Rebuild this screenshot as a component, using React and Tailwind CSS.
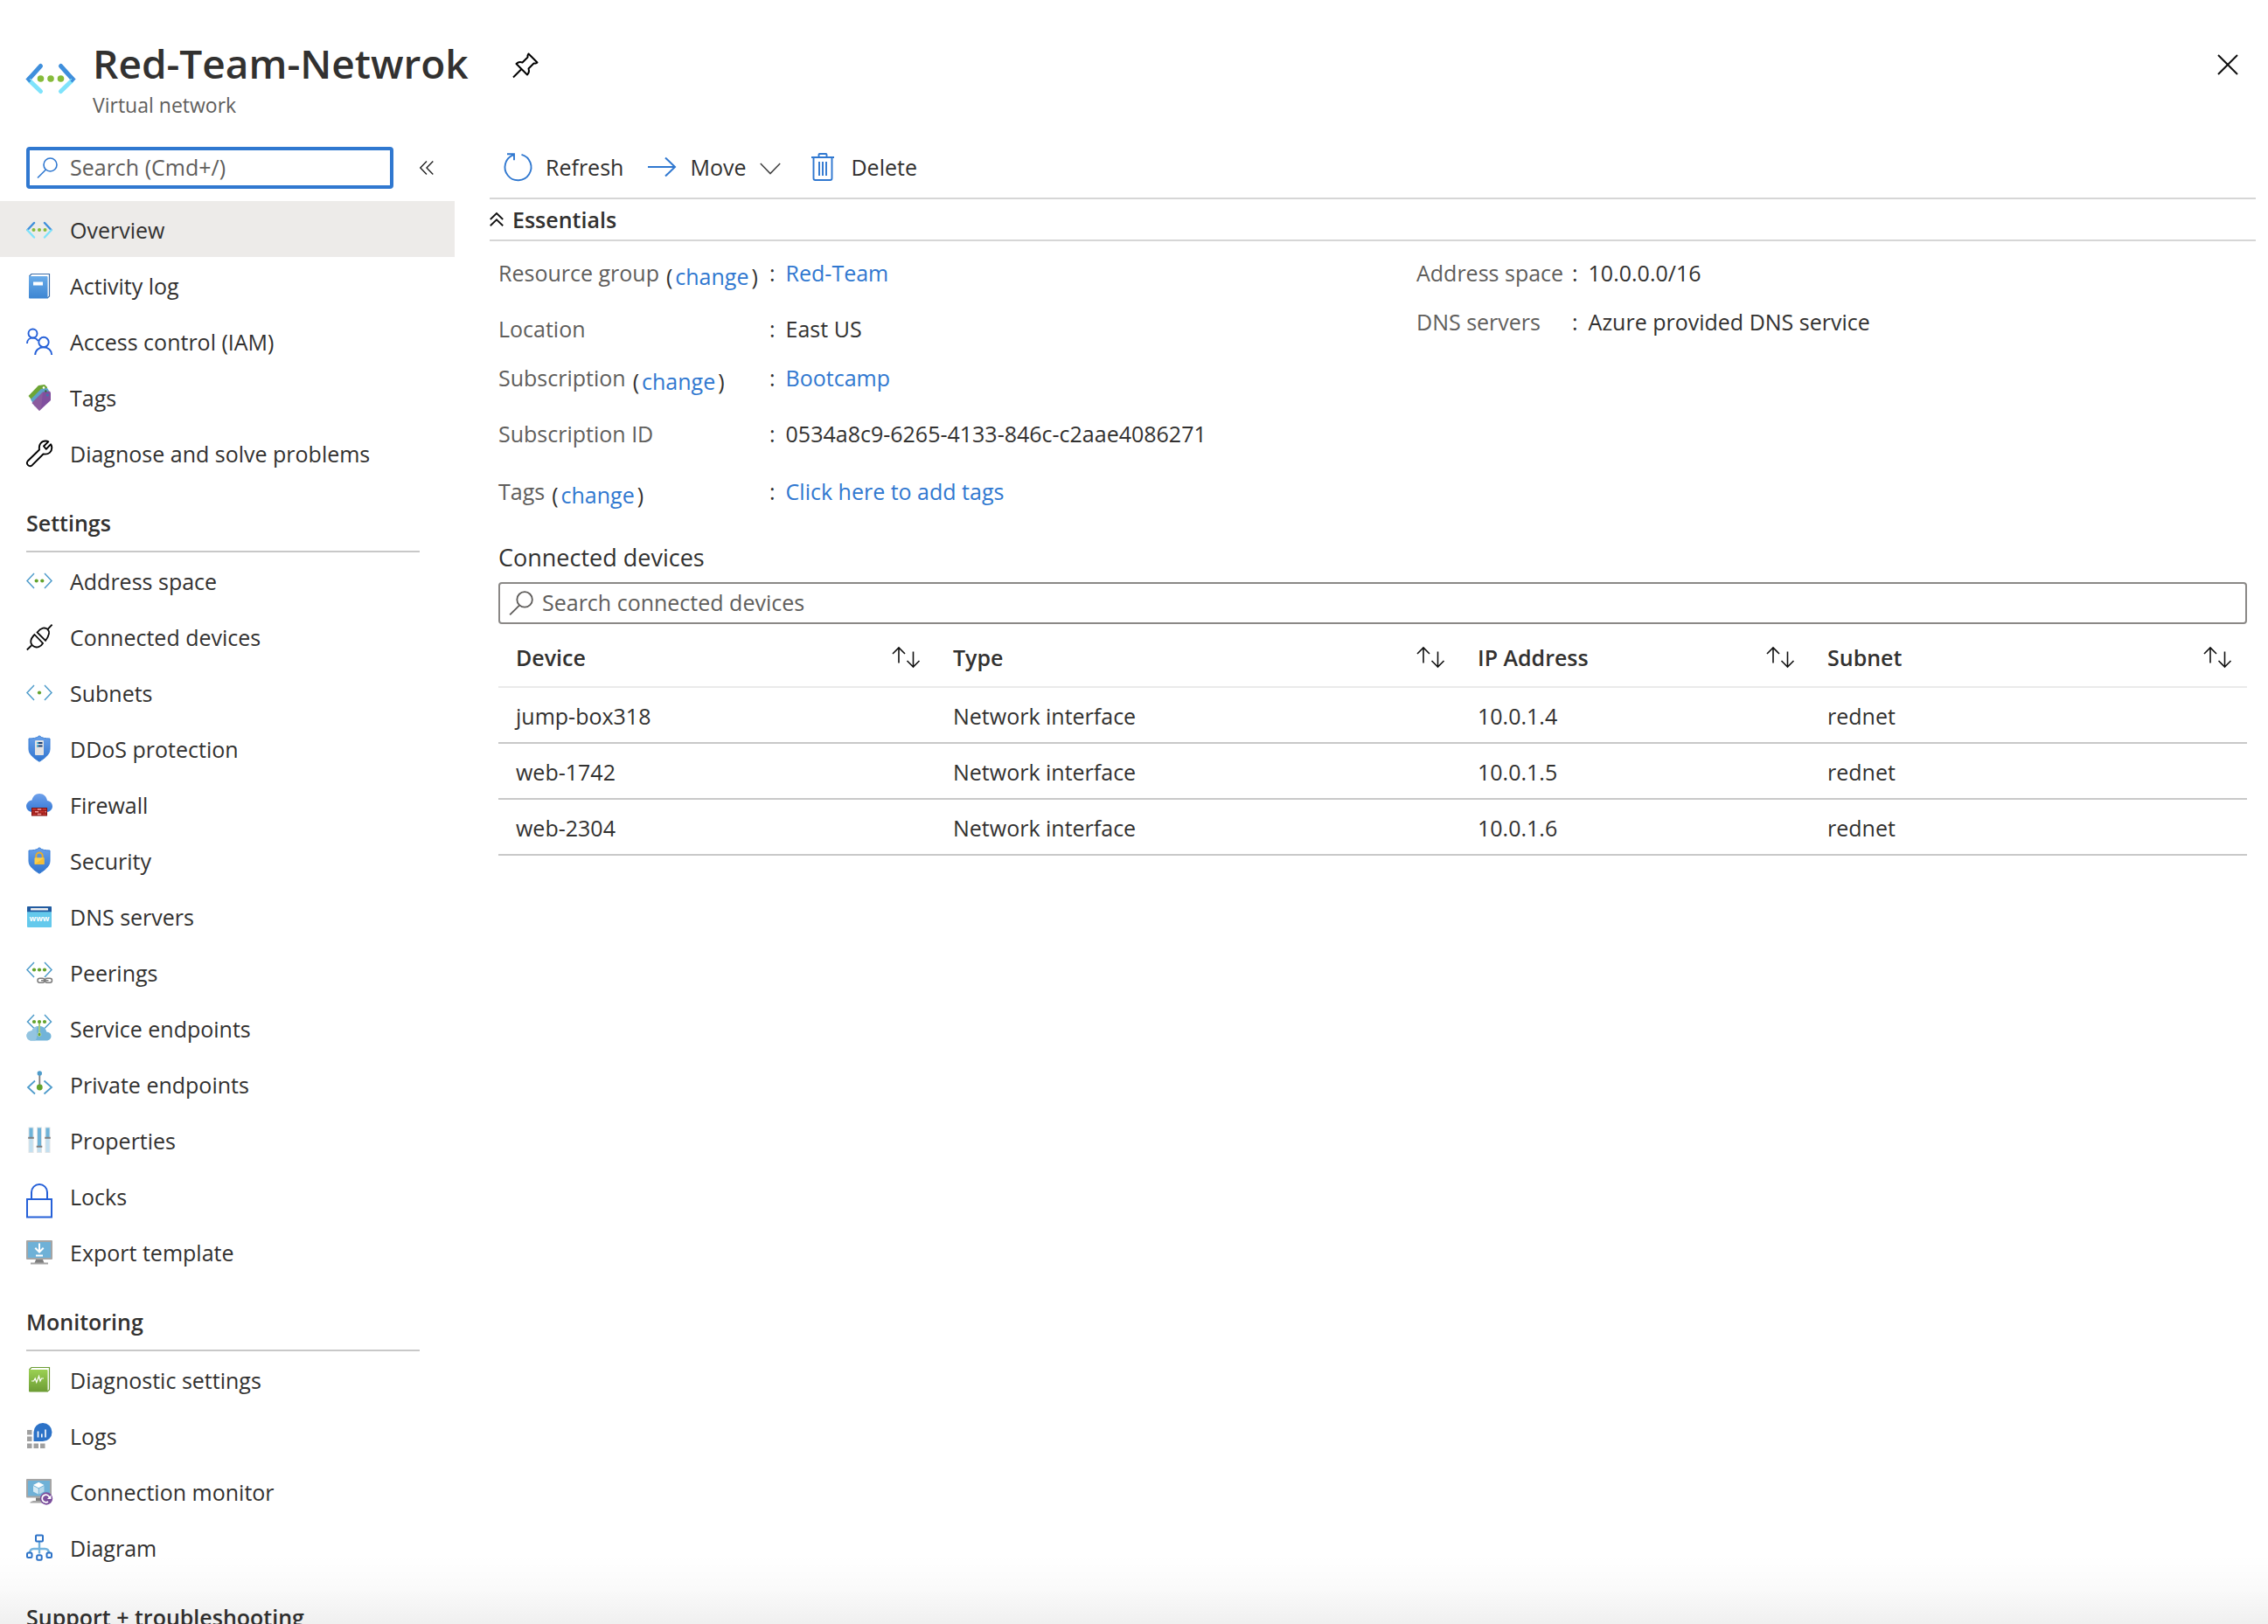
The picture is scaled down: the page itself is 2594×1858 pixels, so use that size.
import React, { useState } from "react";

/* ---------- icons ---------- */

function Svg({ box = "0 0 30 30", className = "size-[30px]", children }) {
  return (
    <svg viewBox={box} className={`shrink-0 overflow-visible ${className}`} fill="none" aria-hidden="true">
      {children}
    </svg>
  );
}

function NetworkIcon({ className }) {
  return (
    <Svg box="0 0 56 34" className={className}>
      <path d="M16.5 2.5 3 17.5M39.5 2.5 53 17.5" stroke="#3f8fdc" strokeWidth="5" strokeLinecap="round" />
      <path d="M4 19.5 16.5 31.5M52 19.5 39.5 31.5" stroke="#7fe3fb" strokeWidth="5" strokeLinecap="round" />
      <path d="M5 14.5 1.5 17.5 4.5 20.5M51 14.5 54.5 17.5 51.5 20.5" stroke="#3f8fdc" strokeWidth="3" />
      <g fill="#86bb3b">
        <circle cx="16.5" cy="17" r="3.8" />
        <circle cx="28" cy="17" r="3.8" />
        <circle cx="39.5" cy="17" r="3.8" />
      </g>
    </Svg>
  );
}

function Brackets({ top = 7 }) {
  return (
    <path
      d={`M9 ${top} 1 ${top + 8.5} 9 ${top + 17}M21 ${top} 29 ${top + 8.5} 21 ${top + 17}`}
      stroke="#4f9ccb"
      strokeWidth="1.5"
    />
  );
}

const OverviewIcon = () => (
  <Svg>
    <path d="M9 8 1.5 16M21 8 28.5 16" stroke="#3f8fdc" strokeWidth="2.4" strokeLinecap="round" />
    <path d="M1.5 16.5 9 24.5M28.5 16.5 21 24.5" stroke="#7fe3fb" strokeWidth="2.4" strokeLinecap="round" />
    <g fill="#86bb3b">
      <circle cx="8.5" cy="16" r="2" />
      <circle cx="15" cy="16" r="2" />
      <circle cx="21.5" cy="16" r="2" />
    </g>
  </Svg>
);

const ActivityIcon = () => (
  <Svg>
    <defs>
      <linearGradient id="bookBlue" x1="0" y1="0" x2="0" y2="1">
        <stop stopColor="#69abe9" />
        <stop offset="1" stopColor="#3d85d2" />
      </linearGradient>
    </defs>
    <path d="M3.5 5 6 2.5H26.5V28L24 30" stroke="#3c6da8" strokeWidth="1.2" fill="#fff" />
    <path d="M3 5h20.5a1 1 0 0 1 1 1v24.5H4a1 1 0 0 1-1-1z" fill="url(#bookBlue)" />
    <rect x="8" y="11.5" width="11" height="4" fill="#fff" />
  </Svg>
);

const AccessIcon = () => (
  <Svg>
    <g stroke="#2560d8" strokeWidth="1.9">
      <circle cx="7.5" cy="6.5" r="5" />
      <path d="M1 18C1 14 4 11.6 7.5 11.6c2.7 0 5 1.4 6 3.6" />
      <circle cx="20" cy="16.5" r="5.7" />
      <path d="M10.200 31c0-5 4.300-8.800 9.600-8.800s9.400 3.800 9.400 8.800" />
    </g>
  </Svg>
);

const TagsIcon = () => (
  <Svg>
    <path d="M2.500 14 14 2l7-1 3 3-1 8L8 21z" fill="#6da535" />
    <path d="M5 18 17 6l7-1 2 3-1 9-15 9z" fill="#5ea0c8" />
    <path d="M6.500 22 19 9.500l8-1 1 2V19L15 31z" fill="#804f9e" />
    <path d="M6.500 22 19 9.500 17 29l-2 2z" fill="#93649f" opacity=".6" />
    <circle cx="20" cy="4.5" r="1.3" fill="#fff" />
    <circle cx="22.3" cy="8.5" r="1.2" fill="#356b35" />
    <circle cx="24.3" cy="13" r="1.6" fill="#3e77ad" />
  </Svg>
);

const WrenchIcon = () => (
  <Svg>
    <path
      d="M15 11.5C14 5.5 17.5 1.5 22 1.5c1.2 0 2.4.3 3.300.9L20 7.5l2.800 3.300L28 5.300c1 1.300 1.300 2.700 1.300 4C29.300 13.500 26 17.500 19.500 16.500L6.600 29.400A3.500 3.500 0 0 1 1.700 24.500z"
      stroke="#000"
      strokeWidth="1.9"
      strokeLinejoin="round"
    />
  </Svg>
);

const AddressIcon = () => (
  <Svg>
    <Brackets />
    <circle cx="11.7" cy="15.5" r="2.1" fill="#63a32c" />
    <circle cx="18.3" cy="15.5" r="2.1" fill="#63a32c" />
  </Svg>
);

const PlugIcon = () => (
  <Svg>
    <g stroke="#0a0a0a" strokeWidth="1.8">
      <path d="M.8 30.500 6 25.500M24 7.500 29.600 1.700" />
      <path d="M9.500 13 19 23c-2.200 4.200-7.200 5.500-10.400 3.600C4 23.800 4 18.500 9.500 13z" />
      <path d="M12.500 10.500c4.500-5.500 9-6 11.900-3.600 2.700 2.600 1.900 7.400-2.400 13.100z" />
    </g>
  </Svg>
);

const SubnetsIcon = () => (
  <Svg>
    <Brackets />
    <circle cx="15" cy="15.5" r="2.1" fill="#63a32c" />
  </Svg>
);

function Shield({ children }) {
  return (
    <Svg>
      <defs>
        <linearGradient id="shieldBlue" x1="0" y1="0" x2="0" y2="1">
          <stop stopColor="#6ba2ea" />
          <stop offset="1" stopColor="#2f74cf" />
        </linearGradient>
      </defs>
      <path
        d="M15 .8c3.200 3 7.200 3 12 3.200V16c0 6-5.500 10.300-12 14.300C8.500 26.300 3 22 3 16V4c4.800-.2 8.800-.2 12-3.200z"
        fill="url(#shieldBlue)"
        stroke="#3b7fd6"
        strokeWidth="1"
      />
      {children}
    </Svg>
  );
}

const DdosIcon = () => (
  <Shield>
    <rect x="10" y="6" width="10" height="17" rx="1" fill="#e3e3e3" />
    <path d="M12 9h6.500M12 12.500h6.500" stroke="#1b3f74" strokeWidth="1.8" />
    <path d="M12 9h1.800M12 12.500h1.800" stroke="#4fc4e8" strokeWidth="1.8" />
  </Shield>
);

const FirewallIcon = () => (
  <Svg>
    <defs>
      <linearGradient id="cloudBlue" x1="0" y1="0" x2="0" y2="1">
        <stop stopColor="#70a1eb" />
        <stop offset="1" stopColor="#3478d4" />
      </linearGradient>
    </defs>
    <path
      d="M7 24A6.800 6.800 0 0 1 0 17.500c0-3.500 2.700-6.500 6.500-7C7.500 6 10.500 3 15 3c4.800 0 8.300 3.200 9 8 3.400.3 6 3 6 6.500S27 24 23.500 24z"
      fill="url(#cloudBlue)"
    />
    <rect x="6.5" y="19.5" width="17" height="8.5" fill="#c8332d" stroke="#7d1513" />
    <path
      d="M6.500 22.300h17M6.500 25.200h17M12 19.500v2.800M18 19.500v2.800M9 22.300v2.900M15 22.300v2.900M21 22.300v2.900M12 25.200V28M18 25.200V28"
      stroke="#7d1513"
      strokeWidth=".8"
    />
    <path d="M12.800 21h4.400M10 23.800h4.200M12.800 26.600h4.400M21.600 23.800h1.200" stroke="#ee9a9a" strokeWidth="1.5" />
  </Svg>
);

const SecurityIcon = () => (
  <Shield>
    <path d="M11.300 13v-2.800a3.700 3.700 0 0 1 7.400 0V13" stroke="#e9ae2a" strokeWidth="2" />
    <rect x="9.5" y="12.3" width="11" height="7.7" rx=".8" fill="#fbcf4b" />
    <path d="M20.500 12.300V20H9.500z" fill="#f3bd36" />
  </Shield>
);

const DnsIcon = () => (
  <Svg>
    <rect x="1" y="4" width="28" height="24" rx="1" fill="#64c9ec" />
    <path d="M1 10.300V5a1 1 0 0 1 1-1h26a1 1 0 0 1 1 1v5.300z" fill="#215a9f" />
    <rect x="5" y="6" width="20" height="2.6" rx=".5" fill="#f2f2f2" />
    <text x="15" y="21" textAnchor="middle" fontSize="9" fontWeight="700" fill="#fff" fontFamily="Open Sans, sans-serif">
      www
    </text>
  </Svg>
);

function ThreeDots({ y }) {
  return (
    <g fill="#63a32c">
      <circle cx="9" cy={y} r="2.1" />
      <circle cx="15" cy={y} r="2.1" />
      <circle cx="21" cy={y} r="2.1" />
    </g>
  );
}

const PeeringsIcon = () => (
  <Svg>
    <Brackets top={4} />
    <ThreeDots y={12.5} />
    <g stroke="#7c7c7c" strokeWidth="1.5">
      <rect x="13" y="22.3" width="8" height="5" rx="2.5" />
      <rect x="21.5" y="22.3" width="8" height="5" rx="2.5" />
      <path d="M17 24.800h8.500" />
    </g>
  </Svg>
);

const ServiceIcon = () => (
  <Svg>
    <path d="M9 0 1.500 8 9 15.500M21 0 28.500 8 21 15.500" stroke="#4f9ccb" strokeWidth="1.5" />
    <path
      d="M6.500 29.500C3 29.500.5 27.500.5 24s2.500-5.600 6-5.600C7.500 15 11 13 15 13c4.500 0 7.500 2.500 8.200 6.500 3.300.2 5.300 2.300 5.300 5s-2.200 5-5.300 5z"
      fill="#72b4d9"
    />
    <path d="M6.500 29.500C3 29.500.5 27.500.5 24s2.500-5.600 6-5.600c.9-2.900 3-4.600 6-5.200-2 5 2 11-2 16.300z" fill="#93c4e0" />
    <path d="M15 8v15" stroke="#a5cd7d" strokeWidth="2" />
    <ThreeDots y={8} />
    <rect x="13.2" y="20.5" width="3.6" height="4" rx="1.5" fill="#63a32c" stroke="#cde0b9" strokeWidth=".7" />
  </Svg>
);

const PrivateIcon = () => (
  <Svg>
    <path d="M10 11.500 2 19l8 7.500M20.500 11.500l8.500 7.500-8.500 7.500" stroke="#4f9ccb" strokeWidth="1.8" />
    <path d="M15.300 4v14" stroke="#7d7d7d" strokeWidth="1.8" />
    <circle cx="15.3" cy="3" r="2.7" fill="#4f9ccb" />
    <circle cx="15.3" cy="19" r="3.4" fill="#63a32c" />
  </Svg>
);

const PropertiesIcon = () => (
  <Svg>
    {[
      [3, 12],
      [12.5, 22],
      [22, 12],
    ].map(([x, y]) => (
      <g key={x}>
        <rect x={x - 0.5} y=".5" width="6" height="29.5" fill="#dfe3e6" />
        <rect x={x + 0.5} y="1.5" width="4" height="27.5" fill="#c3e0f0" />
        <rect x={x + 0.5} y="1.5" width="4" height={y - 1.5} fill="#6fb3d8" />
        <path d={`M${x - 0.8} ${y + 0.8}h6.600`} stroke="#7f7f7f" strokeWidth="2" />
      </g>
    ))}
  </Svg>
);

const LockIcon = () => (
  <Svg>
    <rect x="1" y="19" width="28" height="20.5" stroke="#2560d8" strokeWidth="2" />
    <path d="M6 19v-8a9 9 0 0 1 18 0v8" stroke="#2560d8" strokeWidth="2" />
  </Svg>
);

const ExportIcon = () => (
  <Svg>
    <rect x="0" y="2" width="30" height="22" rx="1" fill="#a5a5a5" />
    <rect x="2" y="4" width="26" height="18" fill="#6fb1d7" />
    <path d="M11 24h8l1.500 4h-11z" fill="#7e7e7e" />
    <rect x="5" y="27.5" width="20" height="2" fill="#a5a5a5" />
    <path d="M15 5.500V15M10.300 10.800 15 15.500l4.700-4.700M11 19.500h8" stroke="#fff" strokeWidth="2" />
  </Svg>
);

const DiagnosticIcon = () => (
  <Svg>
    <defs>
      <linearGradient id="bookGreen" x1="0" y1="0" x2="0" y2="1">
        <stop stopColor="#9bd053" />
        <stop offset="1" stopColor="#6c9c34" />
      </linearGradient>
    </defs>
    <path d="M3.500 4 6 1.500H26.500V27L24 29" stroke="#6c9c34" strokeWidth="1.2" fill="#fff" />
    <path d="M3 4h20.500a1 1 0 0 1 1 1v24.500H4a1 1 0 0 1-1-1z" fill="url(#bookGreen)" />
    <path d="M6 17h2.500l1.700-3 1.600 4.500 2.700-7 1.500 5.500 1.500-3H20" stroke="#fff" strokeWidth="1.2" />
  </Svg>
);

const LogsIcon = () => (
  <Svg>
    <g fill="#a0a0a0">
      <rect x="1" y="9" width="5.5" height="5.5" />
      <rect x="1" y="16.5" width="5.5" height="5.5" />
      <rect x="1" y="24.5" width="5.5" height="5.5" />
      <rect x="8.5" y="24.5" width="5.5" height="5.5" />
      <rect x="16" y="24.5" width="5.5" height="5.5" />
    </g>
    <path d="M8.500 22V11.500A10.500 10.500 0 1 1 19 22z" fill="#2c72c7" />
    <path d="M13.500 10.500v7M17.800 13.500v4M22 8.500v9" stroke="#fff" strokeWidth="1.6" />
  </Svg>
);

const MonitorIcon = () => (
  <Svg>
    <rect x="0" y="1" width="29" height="21.5" rx="1" fill="#a5a5a5" />
    <rect x="2" y="3" width="25" height="17.5" fill="#6fb1d7" />
    <path d="M11 22.500h7v4h-7z" fill="#7e7e7e" />
    <path d="M4.500 27.500 8 26h12v2.500H4.500z" fill="#a5a5a5" />
    <path d="M8 8l6.200-3.200L20.500 8l-6.300 3.200z" fill="#fff" />
    <path d="M8 9l5.800 3v6.500L8 15.500z" fill="#d5eaf5" />
    <path d="M20.500 9l-5.800 3v6.500l5.800-3z" fill="#b6d9ec" />
    <circle cx="23" cy="23.5" r="7.2" fill="#7b4f9d" />
    <path d="M25 27a4.300 4.300 0 1 1 1.500-5" stroke="#fff" strokeWidth="1.8" />
    <path d="M28.500 19.500v4.500h-4.600z" fill="#fff" />
  </Svg>
);

const DiagramIcon = () => (
  <Svg>
    <path d="M15 8.500v14M4 22.500c0-4 1.500-5.500 4.500-5.500h13c3 0 4.500 1.500 4.500 5.500" stroke="#74b4de" strokeWidth="2.4" />
    <g fill="#fff" stroke="#2c72c7" strokeWidth="2">
      <rect x="11" y="1.5" width="8" height="7" rx="1" />
      <rect x="1" y="21.5" width="5.5" height="5.5" rx="1.5" />
      <rect x="12.2" y="24.3" width="5.5" height="5.5" rx="1.5" />
      <rect x="23.5" y="21.5" width="5.5" height="5.5" rx="1.5" />
    </g>
  </Svg>
);

function SearchIcon({ className }) {
  return (
    <Svg box="0 0 24 24" className={className}>
      <circle cx="15.5" cy="8.5" r="7.5" stroke="currentColor" strokeWidth="1.6" />
      <path d="M10.500 14 1 23.500" stroke="currentColor" strokeWidth="1.6" />
    </Svg>
  );
}

const SortIcon = () => (
  <Svg box="0 0 32 24" className="h-6 w-8">
    <path d="M8 18.500V1M1 8l7-7 7 7M24.500 5.500V23M17.500 16l7 7 7-7" stroke="#111" strokeWidth="1.6" />
  </Svg>
);

/* ---------- data ---------- */

const groups = [
  {
    items: [
      ["Overview", OverviewIcon],
      ["Activity log", ActivityIcon],
      ["Access control (IAM)", AccessIcon],
      ["Tags", TagsIcon],
      ["Diagnose and solve problems", WrenchIcon],
    ],
  },
  {
    title: "Settings",
    items: [
      ["Address space", AddressIcon],
      ["Connected devices", PlugIcon],
      ["Subnets", SubnetsIcon],
      ["DDoS protection", DdosIcon],
      ["Firewall", FirewallIcon],
      ["Security", SecurityIcon],
      ["DNS servers", DnsIcon],
      ["Peerings", PeeringsIcon],
      ["Service endpoints", ServiceIcon],
      ["Private endpoints", PrivateIcon],
      ["Properties", PropertiesIcon],
      ["Locks", LockIcon],
      ["Export template", ExportIcon],
    ],
  },
  {
    title: "Monitoring",
    items: [
      ["Diagnostic settings", DiagnosticIcon],
      ["Logs", LogsIcon],
      ["Connection monitor", MonitorIcon],
      ["Diagram", DiagramIcon],
    ],
  },
  { title: "Support + troubleshooting", items: [] },
];

const devices = [
  ["jump-box318", "Network interface", "10.0.1.4", "rednet"],
  ["web-1742", "Network interface", "10.0.1.5", "rednet"],
  ["web-2304", "Network interface", "10.0.1.6", "rednet"],
];

const columns = [
  ["Device", "w-[25%]"],
  ["Type", "w-[30%]"],
  ["IP Address", "w-[20%]"],
  ["Subnet", "w-[25%]"],
];

/* ---------- parts ---------- */

function Header() {
  return (
    <header className="flex h-[148px] items-start pr-[34px] pl-[30px]">
      <NetworkIcon className="mt-[73px] h-[34px] w-14" />
      <div className="ml-5 pt-[42px]">
        <h1 className="text-[46px] leading-[60px] font-semibold">Red-Team-Netwrok</h1>
        <p className="text-[23px] leading-9 text-[#605e5c]">Virtual network</p>
      </div>
      <button type="button" aria-label="Pin" className="mt-[60px] ml-[50px]">
        <Svg>
          <path
            d="M18.500 1.500 28.500 11.500 26.500 12.500 24.500 12.500 18.500 18.500C19.500 21.500 18.500 24 17 25.500L4.500 13C6 11.500 8.500 10.500 11.500 11.500L17.500 5.500 17.500 3.500zM10.500 19 1 28.500"
            stroke="#000"
            strokeWidth="2"
            strokeLinejoin="round"
          />
        </Svg>
      </button>
      <button type="button" aria-label="Close" className="mt-[62px] ml-auto">
        <Svg box="0 0 24 24" className="size-6">
          <path d="M1 1 23 23M23 1 1 23" stroke="#111" strokeWidth="2" />
        </Svg>
      </button>
    </header>
  );
}

function Sidebar() {
  const [active, setActive] = useState("Overview");
  return (
    <aside className="w-[520px] shrink-0">
      <div className="flex h-[82px] items-start pt-5 pl-[30px]">
        <label className="flex h-12 w-[420px] items-center gap-[14px] rounded-sm border-4 border-[#3078d0] pl-2 text-[#605e5c]">
          <SearchIcon className="size-6 text-[#3078d0]" />
          <input
            type="search"
            aria-label="Search menu"
            placeholder="Search (Cmd+/)"
            className="w-full min-w-0 bg-transparent pb-0.5 outline-none placeholder:text-[#605e5c]"
          />
        </label>
        <button type="button" aria-label="Collapse menu" className="mt-4 ml-[30px]">
          <Svg box="0 0 16 16" className="size-4">
            <path d="M8 .5.8 8 8 15.500M15.300.5 8 8l7.300 7.500" stroke="#222" strokeWidth="1.4" />
          </Svg>
        </button>
      </div>
      <nav aria-label="Resource menu">
        {groups.map(({ title, items }) => (
          <section key={title || "main"}>
            {title && (
              <h2 className="mr-10 ml-[30px] flex h-[82px] items-end border-b-2 border-[#c8c8c8] pb-[14px] leading-9 font-semibold">
                {title}
              </h2>
            )}
            <ul>
              {items.map(([label, Icon]) => (
                <li key={label}>
                  <a
                    href="#"
                    onClick={(e) => {
                      e.preventDefault();
                      setActive(label);
                    }}
                    aria-current={active === label ? "page" : undefined}
                    className="flex h-16 items-center gap-5 pl-[30px] aria-[current=page]:bg-[#edebe9]"
                  >
                    <Icon />
                    <span className="pt-0.5">{label}</span>
                  </a>
                </li>
              ))}
            </ul>
          </section>
        ))}
      </nav>
    </aside>
  );
}

function Toolbar() {
  return (
    <div className="flex h-20 items-center border-b-2 border-[#d6d6d6] pt-2 pl-4">
      <button type="button" className="flex items-center gap-4">
        <Svg box="0 0 32 32" className="size-8">
          <path d="M20.500 1.800A15 15 0 1 1 11 2.300M4 1.300h8v7" stroke="#3078d0" strokeWidth="1.9" />
        </Svg>
        Refresh
      </button>
      <button type="button" className="ml-7 flex items-center gap-4">
        <Svg box="0 0 32 32" className="size-8">
          <path d="M0 16h31M20 5.500 31 16 20 26.500" stroke="#3078d0" strokeWidth="2" />
        </Svg>
        Move
        <Svg box="0 0 24 14" className="mt-1 h-[14px] w-6">
          <path d="M.8 1 12 12.500 23.200 1" stroke="#444" strokeWidth="1.6" />
        </Svg>
      </button>
      <button type="button" className="ml-8 flex items-center gap-4">
        <Svg box="0 0 32 32" className="size-8">
          <path
            d="M3 5h26M5.500 5v24a2 2 0 0 0 2 2h17a2 2 0 0 0 2-2V5M11.500 5V2a1 1 0 0 1 1-1h7a1 1 0 0 1 1 1v3M12 10v16M16 10v16M20 10v16"
            stroke="#3078d0"
            strokeWidth="1.9"
          />
        </Svg>
        Delete
      </button>
    </div>
  );
}

function Field({ label, change, value, link, className, labelWidth }) {
  return (
    <div className={`flex items-start leading-9 ${className}`}>
      <dt className={`flex shrink-0 gap-2 text-[#605e5c] ${labelWidth}`}>
        {label}
        {change && (
          <span className="flex gap-[3px] pt-1 text-[#323130]">
            (
            <a href="#" className="text-[#3078d0]">
              change
            </a>
            )
          </span>
        )}
      </dt>
      <dd className="flex gap-3">
        <span>:</span>
        {link ? (
          <a href="#" className="text-[#3078d0]">
            {value}
          </a>
        ) : (
          value
        )}
      </dd>
    </div>
  );
}

function Essentials() {
  return (
    <>
      <button
        type="button"
        aria-expanded="true"
        className="flex h-12 w-full items-center gap-[10px] border-b-2 border-[#d6d6d6] font-semibold"
      >
        <Svg box="0 0 16 16" className="size-4">
          <path d="M.8 8 8 1l7.200 7M.8 15.300 8 8.300l7.200 7" stroke="#111" strokeWidth="1.9" />
        </Svg>
        Essentials
      </button>
      <div className="grid grid-cols-2 gap-x-10 px-[10px] pt-[18px]">
        <dl>
          <Field label="Resource group" change value="Red-Team" link className="h-16" labelWidth="w-[310px]" />
          <Field label="Location" value="East US" className="h-14" labelWidth="w-[310px]" />
          <Field label="Subscription" change value="Bootcamp" link className="h-16" labelWidth="w-[310px]" />
          <Field label="Subscription ID" value="0534a8c9-6265-4133-846c-c2aae4086271" className="h-[66px]" labelWidth="w-[310px]" />
          <Field label="Tags" change value="Click here to add tags" link className="h-16" labelWidth="w-[310px]" />
        </dl>
        <dl className="pl-[30px]">
          <Field label="Address space" value="10.0.0.0/16" className="h-14" labelWidth="w-[178px]" />
          <Field label="DNS servers" value="Azure provided DNS service" className="h-14" labelWidth="w-[178px]" />
        </dl>
      </div>
    </>
  );
}

function Devices() {
  return (
    <section className="px-[10px] pt-3">
      <h2 className="text-[27px] leading-9">Connected devices</h2>
      <label className="mt-[10px] flex h-12 items-center gap-[10px] rounded-sm border-2 border-[#8a8886] pl-[10px] text-[#605e5c]">
        <SearchIcon className="size-7" />
        <input
          type="search"
          aria-label="Search connected devices"
          placeholder="Search connected devices"
          className="w-full min-w-0 bg-transparent pb-0.5 outline-none placeholder:text-[#605e5c]"
        />
      </label>
      <table className="w-full table-fixed text-left">
        <thead>
          <tr className="h-[72px] border-b-2 border-[#eaeaea]">
            {columns.map(([name, width]) => (
              <th key={name} className={`pt-1 pr-[18px] pl-5 font-semibold ${width}`}>
                <button type="button" className="flex w-full items-center justify-between">
                  {name}
                  <SortIcon />
                </button>
              </th>
            ))}
          </tr>
        </thead>
        <tbody>
          {devices.map((row) => (
            <tr key={row[0]} className="h-16 border-b-2 border-[#c8c8c8]">
              {row.map((cell) => (
                <td key={cell} className="pt-0.5 pl-5">
                  {cell}
                </td>
              ))}
            </tr>
          ))}
        </tbody>
      </table>
    </section>
  );
}

export default function App() {
  return (
    <div className="relative h-screen overflow-hidden bg-white font-['Open_Sans','Noto_Sans',sans-serif] text-[25px] leading-9 text-[#323130]">
      <Header />
      <div className="flex">
        <Sidebar />
        <main className="ml-10 min-w-0 flex-1 pr-[14px]">
          <Toolbar />
          <Essentials />
          <Devices />
        </main>
      </div>
      <div className="pointer-events-none absolute inset-x-0 bottom-0 h-20 bg-gradient-to-b from-transparent via-black/2 to-black/6" />
    </div>
  );
}
